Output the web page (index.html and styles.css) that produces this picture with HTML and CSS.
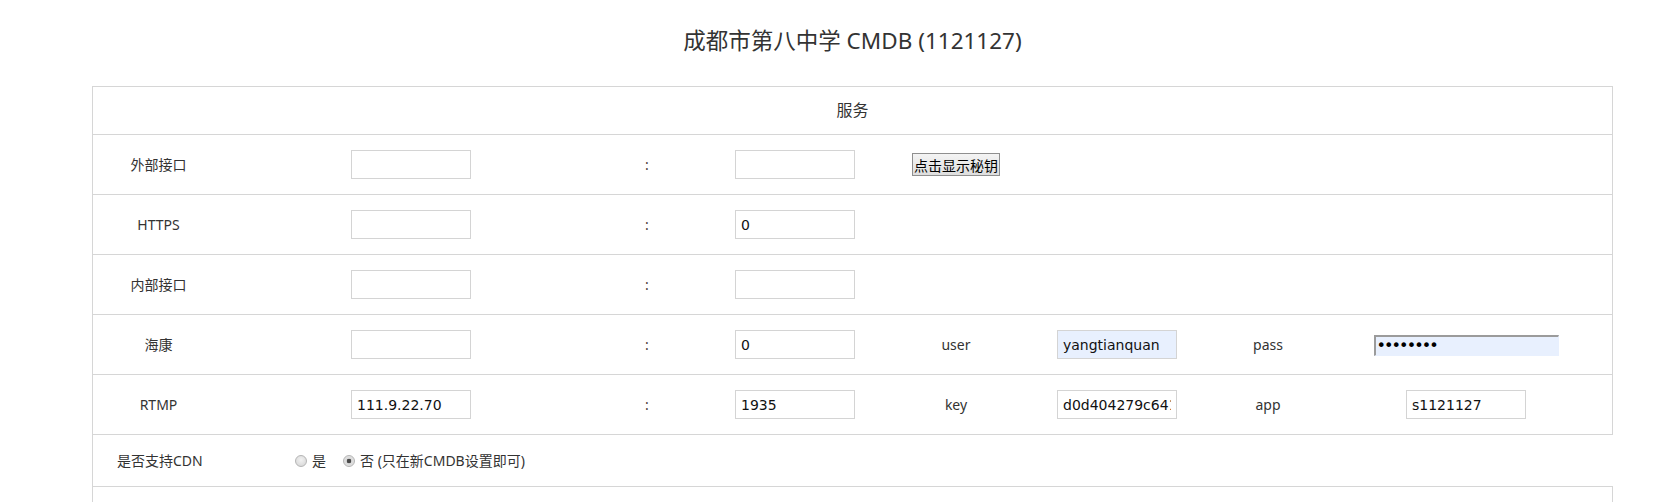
FILE: index.html
```html
<!DOCTYPE html>
<html lang="zh-CN">
<head>
<meta charset="utf-8">
<title>成都市第八中学 CMDB (1121127)</title>
<link rel="stylesheet" href="styles.css">
</head>
<body>
<div class="page">
  <h1 class="title">成都市第八中学 CMDB (1121127)</h1>

  <div class="table">
    <div class="head">服务</div>

    <div class="row">
      <div class="cell">外部接口</div>
      <div class="cell"><input class="field" type="text" value=""></div>
      <div class="cell colon">:</div>
      <div class="cell"><input class="field" type="text" value=""></div>
      <div class="cell"><button class="btn" type="button">点击显示秘钥</button></div>
      <div class="cell"></div>
      <div class="cell"></div>
      <div class="cell"></div>
    </div>

    <div class="row">
      <div class="cell">HTTPS</div>
      <div class="cell"><input class="field" type="text" value=""></div>
      <div class="cell colon">:</div>
      <div class="cell"><input class="field" type="text" value="0"></div>
      <div class="cell"></div>
      <div class="cell"></div>
      <div class="cell"></div>
      <div class="cell"></div>
    </div>

    <div class="row">
      <div class="cell">内部接口</div>
      <div class="cell"><input class="field" type="text" value=""></div>
      <div class="cell colon">:</div>
      <div class="cell"><input class="field" type="text" value=""></div>
      <div class="cell"></div>
      <div class="cell"></div>
      <div class="cell"></div>
      <div class="cell"></div>
    </div>

    <div class="row">
      <div class="cell">海康</div>
      <div class="cell"><input class="field" type="text" value=""></div>
      <div class="cell colon">:</div>
      <div class="cell"><input class="field" type="text" value="0"></div>
      <div class="cell">user</div>
      <div class="cell"><input class="field autofill" type="text" value="yangtianquan"></div>
      <div class="cell">pass</div>
      <div class="cell"><input class="pass autofill" type="password" value="12345678"></div>
    </div>

    <div class="row">
      <div class="cell">RTMP</div>
      <div class="cell"><input class="field" type="text" value="111.9.22.70"></div>
      <div class="cell colon">:</div>
      <div class="cell"><input class="field" type="text" value="1935"></div>
      <div class="cell">key</div>
      <div class="cell"><input class="field" type="text" value="d0d404279c641a7e"></div>
      <div class="cell">app</div>
      <div class="cell"><input class="field" type="text" value="s1121127"></div>
    </div>
  </div>

  <div class="cdn">
    <span class="cdn-label">是否支持CDN</span>
    <label class="opt"><input class="radio" type="radio" name="cdn"> 是</label>
    <label class="opt"><input class="radio" type="radio" name="cdn" checked> 否 (只在新CMDB设置即可)</label>
  </div>

  <div class="table next"></div>
</div>
</body>
</html>
```

FILE: styles.css
```css
html, body {
  margin: 0;
  padding: 0;
  background: #fff;
  overflow: hidden;
}

body {
  font-family: "Noto Sans", "Noto Sans CJK SC", sans-serif;
  color: #333;
  font-size: 14px;
}

.page {
  padding-left: 92px;
  width: 1521px;
}

.title {
  margin: 0;
  height: 86px;
  line-height: 82px;
  text-align: center;
  font-size: 22.5px;
  font-weight: normal;
  color: #333;
}

.table {
  border: 1px solid #d6d6d6;
  border-bottom: none;
}

.head {
  height: 47px;
  line-height: 46px;
  text-align: center;
  font-size: 16px;
  border-bottom: 1px solid #d6d6d6;
}

.row {
  display: grid;
  grid-template-columns: 131px 374px 98px 198px 124px 198px 104px 292px;
  height: 59px;
  border-bottom: 1px solid #d6d6d6;
}

.cell {
  display: flex;
  align-items: center;
  justify-content: center;
  font-size: 14px;
  line-height: 20px;
}

.colon {
  color: #4a3a35;
}

.field {
  box-sizing: border-box;
  width: 120px;
  height: 29px;
  margin: 0;
  padding: 0 5px;
  border: 1px solid #d4d4d4;
  background: #fff;
  font-family: "DejaVu Sans", Verdana, sans-serif;
  font-size: 14px;
  color: #111;
  outline: none;
}

.autofill {
  background: #e8f0fe;
}

.pass {
  box-sizing: border-box;
  width: 185px;
  height: 21px;
  margin: 1px 0 0;
  padding: 0 1px;
  border-top: 2px solid #9b9b9b;
  border-left: 2px solid #9b9b9b;
  border-right: 1px solid #e8f0fe;
  border-bottom: 1px solid #e8f0fe;
  background: #e8f0fe;
  font-family: "DejaVu Sans", Verdana, sans-serif;
  font-size: 16px;
  letter-spacing: -1.9px;
  color: #000;
  outline: none;
}

.btn {
  box-sizing: border-box;
  width: 88px;
  height: 23px;
  margin: 0;
  padding: 0;
  border: 1px solid #8f8f8f;
  border-radius: 0;
  background: linear-gradient(#f4f4f4, #dedede);
  font-family: "Noto Sans CJK SC", sans-serif;
  font-size: 14px;
  line-height: 20px;
  white-space: nowrap;
  color: #000;
}

.cdn {
  display: flex;
  align-items: center;
  height: 51px;
  padding: 1px 0 0 24px;
  box-sizing: border-box;
  border-left: 1px solid #d6d6d6;
  line-height: 20px;
  font-size: 14px;
}

.cdn-label {
  width: 178px;
}

.opt {
  display: flex;
  align-items: center;
  margin-right: 17px;
}

.radio {
  appearance: none;
  -webkit-appearance: none;
  box-sizing: border-box;
  width: 12px;
  height: 12px;
  margin: 0 5px 0 0;
  border: 1px solid #b5b5b5;
  border-radius: 50%;
  background: radial-gradient(circle at 50% 40%, #f2f2f2 0%, #dcdcdc 70%, #cfcfcf 100%);
}

.radio:checked {
  background: radial-gradient(circle, #4a4a4a 0, #4a4a4a 2px, #dadada 2.6px, #e4e4e4 100%);
}

.next {
  height: 40px;
}
```
